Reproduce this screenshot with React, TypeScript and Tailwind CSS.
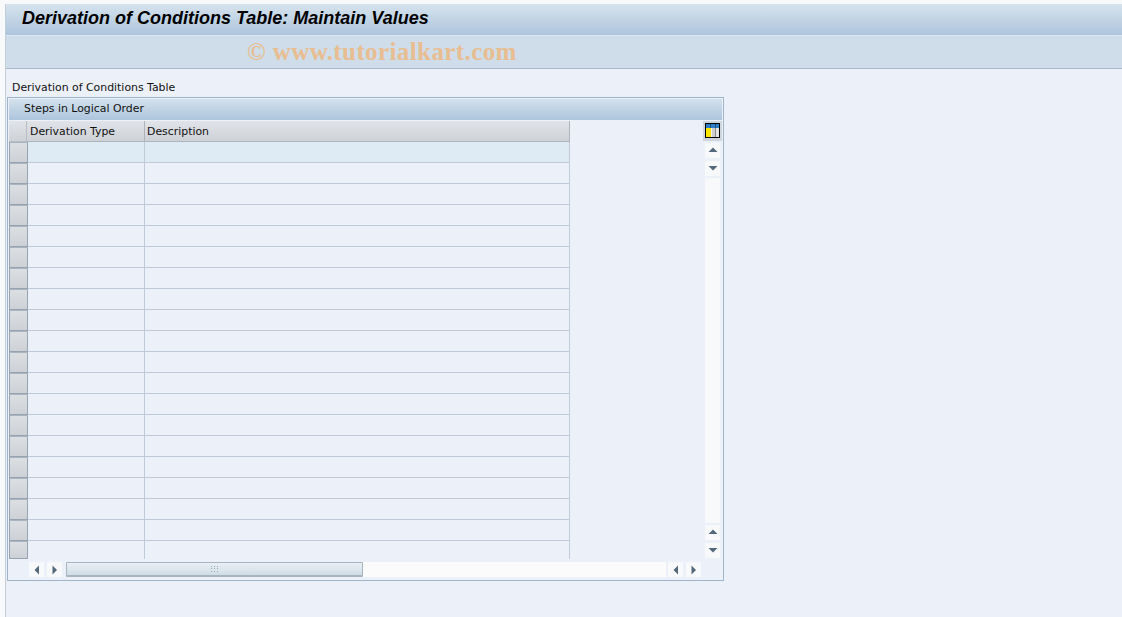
const ROWS = Array.from({ length: 20 }, (_, i) => i);

function ArrowBtn({ dir }: { dir: "up" | "down" | "left" | "right" }) {
  const points = {
    up: "0.5,6 5,1.5 9.5,6",
    down: "0.5,2 9.5,2 5,6.5",
    left: "7,0.5 7,9.5 2.5,5",
    right: "2.5,0.5 2.5,9.5 7,5",
  }[dir];
  return (
    <div className="w-[15px] h-[15px] bg-[#f8f9fb] flex items-center justify-center shrink-0">
      <svg width="10" height="10" viewBox="0 0 10 10">
        <polygon points={points} fill="#54687c" />
      </svg>
    </div>
  );
}

function ColumnsIcon() {
  return (
    <svg width="15" height="15" viewBox="0 0 15 15" className="block" shapeRendering="crispEdges">
      <rect x="0" y="0" width="15" height="15" fill="#000" />
      <rect x="1" y="1" width="13" height="13" fill="#fff" />
      <rect x="1" y="1" width="13" height="4" fill="#2f7fc8" />
      <rect x="1" y="5" width="5" height="9" fill="#ffe600" />
      <rect x="5" y="1" width="1" height="4" fill="#1c4f86" />
      <rect x="6" y="5" width="1" height="9" fill="#f0f0f0" />
      <rect x="7" y="5" width="3" height="9" fill="#cfcfcf" />
      <rect x="10" y="1" width="1" height="4" fill="#1c4f86" />
      <rect x="10" y="5" width="1" height="9" fill="#8a8a8a" />
      <rect x="11" y="5" width="3" height="9" fill="#e4e4e4" />
    </svg>
  );
}

function GripDots() {
  return (
    <svg width="9" height="7" viewBox="0 0 9 7" shapeRendering="crispEdges">
      {[0, 3, 6].map((x) =>
        [0, 2, 5].map((y) => <rect key={`${x}-${y}`} x={x + 0.5} y={y} width="1.5" height="1" fill="#9aa7b4" />)
      )}
    </svg>
  );
}

export default function App() {
  return (
    <div className="w-[1122px] h-[617px] overflow-hidden bg-[#f8f9fb] pt-[4px] pl-[5px] font-['DejaVu_Sans',sans-serif] text-[10.9px] text-[#111]">
      <div className="h-[613px] border-l border-[#c4ced9] bg-[#ecf0f8] flex flex-col">
        {/* Title bar */}
        <div className="h-[32px] bg-gradient-to-b from-[#d6e3ed] to-[#adc5dc] pl-[16px] pb-[2px] flex items-center border-b border-[#dfe8f0] font-['Liberation_Sans',sans-serif] text-[18px] font-bold italic text-black">
          Derivation of Conditions Table: Maintain Values
        </div>
        {/* Toolbar */}
        <div className="h-[33px] bg-[#cedde9] border-b border-[#a9bccf] pl-[241px] flex items-center font-['Liberation_Serif',serif] text-[25px] font-bold text-[#e8bd91] tracking-[0.4px]">
          © www.tutorialkart.com
        </div>

        <div className="pl-[6px] pt-[11px] h-[17px] box-content leading-[15px]">Derivation of Conditions Table</div>

        {/* Table box */}
        <div className="ml-[1px] w-[717px] h-[484px] border border-[#9fb3c9] p-[1px] flex flex-col">
          <div className="h-[21px] shrink-0 bg-gradient-to-b from-[#d3e1ec] to-[#adc5dc] pl-[15px] flex items-center">
            Steps in Logical Order
          </div>
          <div className="flex flex-1 min-h-0">
            <div className="w-[561px] flex flex-col">
              {/* Header */}
              <div className="flex h-[22px] shrink-0">
                <div className="w-[18px] mt-px bg-gradient-to-b from-[#e0e3e7] to-[#ced2d7] border-r border-b border-[#b8bdc4]" />
                <div className="w-[118px] mt-px pl-[3px] pt-[2px] bg-gradient-to-b from-[#e0e3e7] to-[#ced2d7] border-r border-b border-[#aeb4bb] flex items-center">
                  Derivation Type
                </div>
                <div className="flex-1 mt-px pl-[2px] pt-[2px] bg-gradient-to-b from-[#e0e3e7] to-[#ced2d7] border-r border-b border-[#aeb4bb] flex items-center">
                  Description
                </div>
              </div>
              {/* Rows */}
              {ROWS.map((i) => (
                <div key={i} className={`flex shrink-0 ${i === 19 ? "h-[18px]" : "h-[21px]"} ${i === 0 ? "bg-[#deebf4]" : ""}`}>
                  <div className="w-[19px] shrink-0 bg-gradient-to-b from-[#dcdfe2] to-[#cdd0d5] border border-[#97a3b1] border-t-[#aab4c0]" />
                  <div className={`w-[117px] border-r border-[#bfc9d8] ${i < 19 ? "border-b" : ""}`} />
                  <div className={`flex-1 border-r border-[#bfc9d8] ${i < 19 ? "border-b" : ""}`} />
                </div>
              ))}
              {/* Horizontal scrollbar */}
              <div className="h-[15px] mt-[3px] ml-[20px] flex items-center shrink-0 w-[672px]">
                <ArrowBtn dir="left" />
                <div className="w-[3px]" />
                <ArrowBtn dir="right" />
                <div className="flex-1 h-[15px] bg-[#fbfbfb] ml-[4px] flex">
                  <div className="w-[297px] h-[15px] bg-gradient-to-b from-[#eaf0f4] to-[#cfdde7] border border-[#a8b4c0] border-b-2 rounded-[1px] flex items-center justify-center">
                    <GripDots />
                  </div>
                </div>
                <div className="w-[2px]" />
                <ArrowBtn dir="left" />
                <div className="w-[3px]" />
                <ArrowBtn dir="right" />
              </div>
            </div>
            {/* Vertical scrollbar */}
            <div className="ml-[134px] w-[17px] flex flex-col items-center">
              <div className="mt-px w-[19px] h-[20px] bg-[#cfd5dc] flex items-start justify-center pt-[2px] shrink-0">
                <ColumnsIcon />
              </div>
              <div className="mt-[2px]"><ArrowBtn dir="up" /></div>
              <div className="mt-[3px]"><ArrowBtn dir="down" /></div>
              <div className="mt-[2px] w-[15px] h-[345px] bg-[#f8f9fb] shrink-0" />
              <div className="mt-[2px]"><ArrowBtn dir="up" /></div>
              <div className="mt-[3px]"><ArrowBtn dir="down" /></div>
            </div>
          </div>
        </div>
      </div>
    </div>
  );
}
